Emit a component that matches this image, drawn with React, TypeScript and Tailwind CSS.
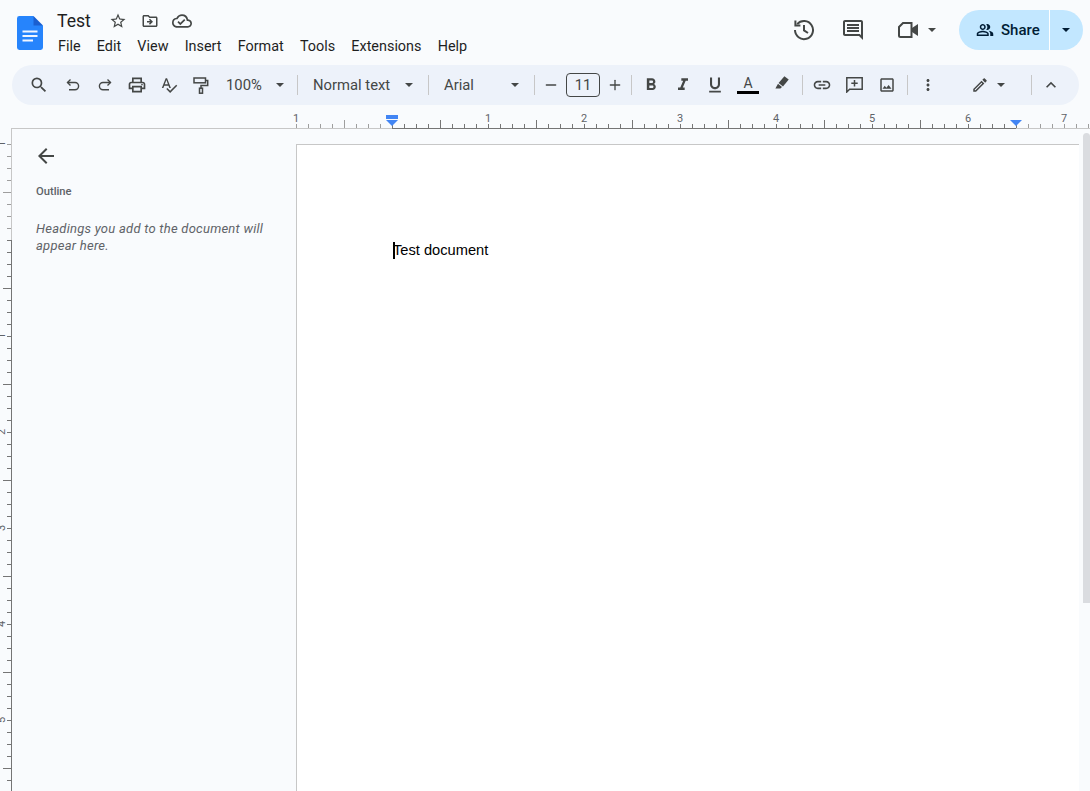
import React from 'react';
import {
  MdArrowBack,
  MdExpandLess,
  MdFormatBold,
  MdFormatItalic,
  MdFormatUnderlined,
  MdLink,
  MdMoreVert,
  MdOutlineCloudDone,
  MdOutlineComment,
  MdOutlineDriveFileMove,
  MdOutlineEdit,
  MdOutlineImage,
  MdOutlinePeopleAlt,
  MdOutlinePrint,
  MdOutlineSpellcheck,
  MdOutlineStarBorder,
  MdSearch,
} from 'react-icons/md';
import { Minus, Plus } from 'lucide-react';

const MENU = ['File', 'Edit', 'View', 'Insert', 'Format', 'Tools', 'Extensions', 'Help'];

const Caret = ({ className = '' }: { className?: string }) => (
  <span className={`block w-0 h-0 border-l-[4px] border-r-[4px] border-t-[4px] border-l-transparent border-r-transparent border-t-[#444746] ${className}`} />
);

const Sep = ({ className = '' }: { className?: string }) => (
  <span className={`block w-px h-5 bg-[#c7c7c7] shrink-0 ${className}`} />
);

const ToolBtn = ({ children, className = '' }: { children: React.ReactNode; className?: string }) => (
  <span className={`flex items-center justify-center w-8 h-7 shrink-0 text-[#444746] ${className}`}>{children}</span>
);

const DocsLogo = () => (
  <svg width="26" height="34" viewBox="0 0 26 34">
    <path d="M16.5 0H2.4A2.4 2.4 0 0 0 0 2.4v29.2A2.4 2.4 0 0 0 2.4 34h21.2a2.4 2.4 0 0 0 2.4-2.4V9.5L19.5 6.5z" fill="#2684fc" />
    <path d="M16.5 0v9.5H26z" fill="#1a5fd0" />
    <path d="M5.5 14.5h15v1.9h-15zM5.5 19h15v1.9h-15zM5.5 23.5h10.5v1.9H5.5z" fill="#f1f6ff" />
  </svg>
);

const UndoIcon = ({ flip = false }: { flip?: boolean }) => (
  <svg width="14" height="14" viewBox="0 0 14 14" fill="none" stroke="#444746" strokeWidth="1.4" className={flip ? '-scale-x-100' : ''}>
    <path d="M4.5 1.5 1.5 4.5l3 3" />
    <path d="M1.5 4.5H9a3.6 3.6 0 0 1 0 7.2H3" />
  </svg>
);

const RollerIcon = () => (
  <svg width="16" height="17" viewBox="0 0 16 17" fill="none" stroke="#444746" strokeWidth="1.5">
    <rect x="1" y="1" width="11.5" height="4.8" />
    <path d="M12.5 3.4h2.2v5H8v3" />
    <rect x="6.5" y="11.2" width="3" height="5" />
  </svg>
);

const Highlighter = () => (
  <svg width="14" height="13" viewBox="0 0 14 13" fill="#444746">
    <path d="M9.4 .3 13.7 3.6 8 10.4 3.6 7z" />
    <path d="M3 7.8 7 10.9 5.4 12.4H.4z" />
  </svg>
);

const AddCommentIcon = () => (
  <svg width="17" height="16" viewBox="0 0 17 16" fill="none" stroke="#444746" strokeWidth="1.5">
    <path d="M.8.8h15.4v11.4H3.6L.8 15z" />
    <path d="M8.5 3v6.4M5.3 6.2h6.4" />
  </svg>
);

const HistoryIcon = () => (
  <svg width="22" height="22" viewBox="0 0 22 22" fill="none" stroke="#444746" strokeWidth="2">
    <path d="M4.2 5.2A9 9 0 1 1 2 11" />
    <path d="M2.4 1.5v5h5" />
    <path d="M11 6v5.4l4 2.6" />
  </svg>
);

const VideoIcon = () => (
  <svg width="22" height="18" viewBox="0 0 22 18" fill="none" stroke="#444746" strokeWidth="2">
    <path d="M2 6 6 2h8.5v14H3.5A1.5 1.5 0 0 1 2 14.5z" />
    <path d="M15 7l6-4v12l-6-4z" fill="#444746" stroke="none" />
  </svg>
);

const HorizontalRuler = () => {
  const ticks = Array.from({ length: 67 }, (_, i) => i);
  const numbers = [
    { x: 296, t: '1' },
    { x: 488, t: '1' },
    { x: 584, t: '2' },
    { x: 680, t: '3' },
    { x: 776, t: '4' },
    { x: 872, t: '5' },
    { x: 968, t: '6' },
    { x: 1064, t: '7' },
  ];
  return (
    <svg width="1090" height="24" viewBox="0 105 1090 24" className="relative z-10 -mb-px block shrink-0">
      <rect x="296" y="128" width="96" height="1" fill="#c7c7c7" />
      <rect x="392" y="128" width="624" height="1" fill="#757575" />
      <rect x="1016" y="128" width="63" height="1" fill="#c7c7c7" />
      {ticks.map((i) => {
        const x = 296 + i * 12;
        const half = i % 8 === 4;
        return <rect key={i} x={x} y={half ? 120 : 124} width="1" height={half ? 8 : 4} fill={x >= 392 && x <= 1016 ? '#757575' : '#9e9e9e'} />;
      })}
      {numbers.map((n) => (
        <text key={n.x} x={n.x} y="122" textAnchor="middle" fontSize="11" fill="#5f6368" style={{ fontFamily: 'Roboto, sans-serif' }}>
          {n.t}
        </text>
      ))}
      <rect x="386" y="115" width="12" height="4" fill="#4285f4" />
      <path d="M386 120h12l-6 6z" fill="#4285f4" />
      <path d="M1010 120h12l-6 6z" fill="#4285f4" />
    </svg>
  );
};

const VerticalRuler = () => {
  const ticks = Array.from({ length: 55 }, (_, i) => i);
  const numbers = [
    { y: 144, t: '1' },
    { y: 336, t: '1' },
    { y: 432, t: '2' },
    { y: 528, t: '3' },
    { y: 624, t: '4' },
    { y: 720, t: '5' },
  ];
  return (
    <svg width="12" height="663" viewBox="0 128 12 663" className="block shrink-0">
      <rect x="11" y="128" width="1" height="112" fill="#c7c7c7" />
      <rect x="11" y="240" width="1" height="551" fill="#757575" />
      {ticks.map((i) => {
        const y = 144 + i * 12;
        const half = i % 8 === 4;
        return <rect key={i} x={half ? 3 : 7} y={y} width={half ? 8 : 4} height="1" fill={y >= 240 ? '#757575' : '#9e9e9e'} />;
      })}
      {numbers.map((n) => (
        <text
          key={n.y}
          x="0"
          y="0"
          transform={`translate(5 ${n.y}) rotate(-90)`}
          textAnchor="middle"
          fontSize="11"
          fill="#5f6368"
          style={{ fontFamily: 'Roboto, sans-serif' }}
        >
          {n.t}
        </text>
      ))}
    </svg>
  );
};

const Header = () => (
  <div className="flex h-[65px] shrink-0">
    <div className="ml-[17px] mt-[16px] shrink-0">
      <DocsLogo />
    </div>
    <div className="ml-[14px] flex flex-col">
      <div className="flex items-center h-[26px] mt-[8px] text-[#444746]">
        <span className="text-[17.6px] leading-[26px] text-[#1f1f1f]">Test</span>
        <MdOutlineStarBorder className="ml-[18px] w-[18px] h-[18px]" />
        <MdOutlineDriveFileMove className="ml-[14px] w-[18px] h-[18px]" />
        <MdOutlineCloudDone className="ml-[13px] w-[20px] h-[20px]" />
      </div>
      <div className="flex mt-[3px] gap-[16.2px] text-[14.4px] leading-[20px] text-[#1f1f1f] pl-px">
        {MENU.map((m) => (
          <span key={m}>{m}</span>
        ))}
      </div>
    </div>
    <div className="ml-auto flex items-center h-[60px] text-[#444746]">
      <HistoryIcon />
      <MdOutlineComment className="ml-[26px] w-[24px] h-[24px]" />
      <span className="ml-[32px]">
        <VideoIcon />
      </span>
      <Caret className="ml-[9px]" />
      <div className="ml-[23px] mr-[7px] flex h-10 w-[124px] rounded-full bg-[#c2e7ff] text-[#001d35]">
        <div className="flex items-center w-[91px] pl-[17px] border-r border-white">
          <MdOutlinePeopleAlt className="w-[18px] h-[18px]" />
          <span className="ml-[7px] text-[15px] font-medium">Share</span>
        </div>
        <div className="flex flex-1 items-center justify-center pr-px">
          <span className="block w-0 h-0 border-l-[4px] border-r-[4px] border-t-[4px] border-l-transparent border-r-transparent border-t-[#001d35]" />
        </div>
      </div>
    </div>
  </div>
);

const Toolbar = () => (
  <div className="flex items-center h-10 ml-[12px] mr-[11px] shrink-0 rounded-full bg-[#edf2fa] text-[14.8px] text-[#444746]">
    <ToolBtn className="ml-[11px]"><MdSearch className="w-[20px] h-[20px]" /></ToolBtn>
    <ToolBtn className="ml-[2px]"><UndoIcon /></ToolBtn>
    <ToolBtn><UndoIcon flip /></ToolBtn>
    <ToolBtn><MdOutlinePrint className="w-[20px] h-[20px]" /></ToolBtn>
    <ToolBtn><MdOutlineSpellcheck className="w-[18px] h-[18px]" /></ToolBtn>
    <ToolBtn><RollerIcon /></ToolBtn>
    <span className="ml-[9px] w-[50px]">100%</span>
    <Caret />
    <Sep className="ml-[13px]" />
    <span className="ml-[15px] w-[92px]">Normal text</span>
    <Caret />
    <Sep className="ml-[15px]" />
    <span className="ml-[15px] w-[67px]">Arial</span>
    <Caret />
    <Sep className="ml-[15px]" />
    <Minus className="ml-[8px] w-4 h-4" strokeWidth={2} />
    <span className="ml-[7px] flex items-center justify-center w-[34px] h-6 rounded border border-[#444746]">11</span>
    <Plus className="ml-[7px] w-4 h-4" strokeWidth={2} />
    <Sep className="ml-[8px]" />
    <ToolBtn className="ml-[3px]"><MdFormatBold className="w-[20px] h-[20px]" /></ToolBtn>
    <ToolBtn><MdFormatItalic className="w-[20px] h-[20px]" /></ToolBtn>
    <ToolBtn><MdFormatUnderlined className="w-[20px] h-[20px]" /></ToolBtn>
    <ToolBtn className="flex-col pl-[2px]">
      <span className="text-[14px] leading-[14px]">A</span>
      <span className="block w-[22px] h-[3px] mt-[1px] bg-black" />
    </ToolBtn>
    <ToolBtn className="ml-[3px] pb-[5px]"><Highlighter /></ToolBtn>
    <Sep className="ml-[4px]" />
    <ToolBtn className="ml-[3px]"><MdLink className="w-[20px] h-[20px]" /></ToolBtn>
    <ToolBtn><AddCommentIcon /></ToolBtn>
    <ToolBtn className="ml-px"><MdOutlineImage className="w-[18px] h-[18px]" /></ToolBtn>
    <Sep className="ml-[4px]" />
    <ToolBtn className="ml-[4px]"><MdMoreVert className="w-[18px] h-[18px]" /></ToolBtn>
    <ToolBtn className="ml-[20px]"><MdOutlineEdit className="w-[18px] h-[18px]" /></ToolBtn>
    <Caret className="ml-[1px]" />
    <Sep className="ml-[26px]" />
    <ToolBtn className="ml-[3px]"><MdExpandLess className="w-[20px] h-[20px]" /></ToolBtn>
  </div>
);

const Outline = () => (
  <div className="w-[284px] shrink-0 border-t border-[#c7c7c7] pl-[24px]">
    <MdArrowBack className="-ml-[2px] mt-[15px] w-6 h-6 text-[#444746]" />
    <div className="mt-[16px] text-[11.2px] leading-[16px] font-medium text-[#5f6368]">Outline</div>
    <div className="mt-[20px] w-[240px] text-[13px] leading-[17px] italic tracking-[0.25px] text-[#5f6368]">
      Headings you add to the document will appear here.
    </div>
  </div>
);

const Page = () => (
  <div className="flex flex-1 min-w-0 border-t border-[#c7c7c7]">
    <div className="mt-[15px] w-[783px] shrink-0 border-t border-l border-[#c7c7c7] bg-white pl-[96px] pt-[96px]">
      <div className="flex items-center h-[18px] text-[14.67px] text-black [font-family:'Liberation_Sans',sans-serif]">
        <span className="block w-[2px] h-[17px] bg-black -mr-[2px]" />
        Test document
      </div>
    </div>
    <div className="ml-auto mt-[4px] w-[7px] h-[470px] rounded-t bg-[#dadce0]" />
  </div>
);

export default function App() {
  return (
    <div className="flex flex-col w-[1090px] h-[791px] overflow-hidden bg-[#f9fbfd] [font-family:Roboto,sans-serif]">
      <Header />
      <Toolbar />
      <HorizontalRuler />
      <div className="flex flex-1 min-h-0">
        <VerticalRuler />
        <Outline />
        <Page />
      </div>
    </div>
  );
}
